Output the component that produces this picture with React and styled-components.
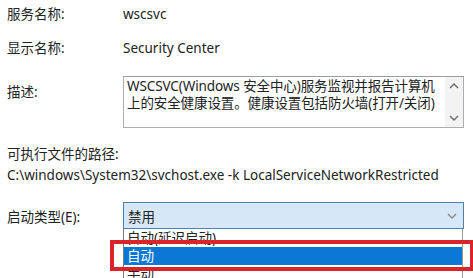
import React from "react";
import styled, { createGlobalStyle } from "styled-components";

const Global = createGlobalStyle`
  html, body { margin: 0; padding: 0; background: #fff; }
  body { font-family: "Noto Sans", "Noto Sans CJK SC", sans-serif; color: #222; }
`;

const Page = styled.div`
  width: 473px;
  height: 278px;
  overflow: hidden;
  box-sizing: border-box;
  padding: 0 9px 0 7px;
  font-size: 13.5px;
`;

const Row = styled.div`
  display: grid;
  grid-template-columns: 116px 1fr;
  align-items: ${(p) => (p.$top ? "start" : "center")};
  min-height: 28px;
  margin-top: ${(p) => p.$mt || 0}px;
`;

const Label = styled.div`
  line-height: 18px;
  padding-top: ${(p) => p.$pt || 0}px;
  white-space: nowrap;
`;

const Value = styled.div`
  line-height: 18px;
  white-space: nowrap;
`;

const TextBox = styled.div`
  display: flex;
  height: 52px;
  box-sizing: border-box;
  border: 1px solid #abadb3;
  border-top-color: #9a9ca3;
  background: #fff;
`;

const TextContent = styled.div`
  flex: 1;
  padding: 1px 3px;
  line-height: 17px;
  white-space: pre-line;
  letter-spacing: -0.1px;
`;

const ScrollBar = styled.div`
  width: 18px;
  background: #f3f3f3;
  display: flex;
  flex-direction: column;
  justify-content: space-between;
  align-items: center;
  padding: 6px 0 6px;
`;

const Section = styled.div`
  margin-top: ${(p) => p.$mt || 0}px;
  line-height: 18px;
  white-space: nowrap;
`;

const ComboWrap = styled.div`
  position: relative;
`;

const Combo = styled.div`
  height: 27px;
  box-sizing: border-box;
  border: 1px solid #4f7fab;
  background: #d6e8f8;
  display: flex;
  align-items: center;
  justify-content: space-between;
  padding: 0 6px 0 4px;
`;

const List = styled.div`
  position: absolute;
  top: 27px;
  left: 0;
  right: 1px;
  background: #fff;
  border-left: 1px solid #7a7a7a;
  border-right: 1px solid #9a9a9a;
`;

const Item = styled.div`
  height: 18px;
  line-height: 18px;
  padding: 0 3px;
  background: ${(p) => (p.$active ? "#0a78d4" : "#fff")};
  color: ${(p) => (p.$active ? "#fff" : "#222")};
`;

const RedBox = styled.div`
  position: absolute;
  top: 38px;
  left: -13px;
  width: 364px;
  height: 31px;
  box-sizing: border-box;
  border: 4px solid #d9242a;
`;

const Chevron = ({ dir = "down", color = "#6a6a6a" }) => (
  <svg width="10" height="6" viewBox="0 0 10 6">
    <path
      d={dir === "down" ? "M1 1 L5 5 L9 1" : "M1 5 L5 1 L9 5"}
      fill="none"
      stroke={color}
      strokeWidth="1.4"
    />
  </svg>
);

export default function App() {
  return (
    <Page>
      <Global />
      <Row>
        <Label>服务名称:</Label>
        <Value>wscsvc</Value>
      </Row>
      <Row $mt={6}>
        <Label>显示名称:</Label>
        <Value>Security Center</Value>
      </Row>
      <Row $top $mt={14}>
        <Label $pt={7}>描述:</Label>
        <TextBox>
          <TextContent>
            {"WSCSVC(Windows 安全中心)服务监视并报告计算机\n上的安全健康设置。健康设置包括防火墙(打开/关闭)"}
          </TextContent>
          <ScrollBar>
            <Chevron dir="up" />
            <Chevron dir="down" />
          </ScrollBar>
        </TextBox>
      </Row>
      <Section $mt={17}>可执行文件的路径:</Section>
      <Section $mt={3}>C:\windows\System32\svchost.exe -k LocalServiceNetworkRestricted</Section>
      <Row $top $mt={18}>
        <Label $pt={6}>启动类型(E):</Label>
        <ComboWrap>
          <Combo>
            <span>禁用</span>
            <Chevron dir="down" color="#8a8a8a" />
          </Combo>
          <List>
            <Item>自动(延迟启动)</Item>
            <Item $active>自动</Item>
            <Item>手动</Item>
          </List>
          <RedBox />
        </ComboWrap>
      </Row>
    </Page>
  );
}
